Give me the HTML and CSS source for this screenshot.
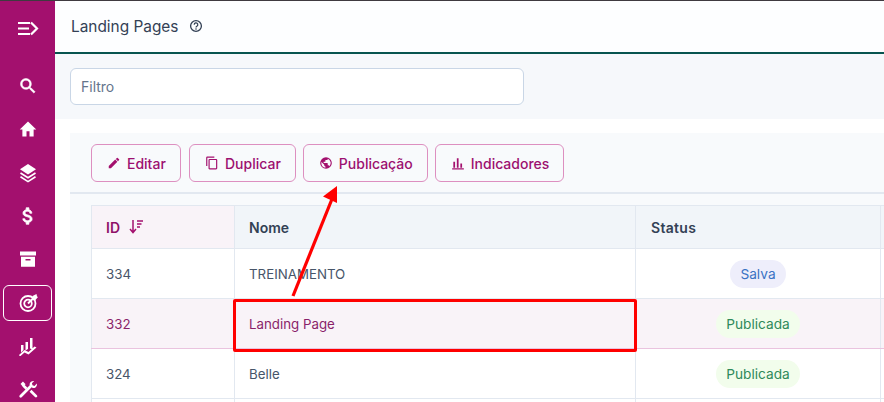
FILE: index.html
```html
<!DOCTYPE html>
<html lang="pt">
<head>
<meta charset="utf-8">
<title>Landing Pages</title>
<link rel="stylesheet" href="styles.css">
</head>
<body>
<div class="app">
  <nav class="sidebar">
    <div class="nav-item nav-toggle"><svg width="22" height="16" viewBox="0 0 22 16"><path d="M1 2h12M1 7.500h11M1 13h12" stroke="#fff" stroke-width="2.200" fill="none"/><path d="M14 1.500L20 7.500 14 13.500" stroke="#fff" stroke-width="2.200" fill="none"/></svg></div>
    <div class="nav-item nav-search"><svg width="20" height="20" viewBox="0 0 24 24"><path fill="#fff" stroke="#fff" stroke-width=".7" d="M15.500 14h-.79l-.28-.27A6.470 6.470 0 0 0 16 9.500 6.500 6.500 0 1 0 9.500 16c1.610 0 3.090-.59 4.230-1.570l.27.28v.79l5 4.990L20.490 19l-4.990-5zm-6 0C7.010 14 5 11.990 5 9.500S7.010 5 9.500 5 14 7.010 14 9.500 11.990 14 9.500 14z"/></svg></div>
    <div class="nav-item"><svg width="18" height="18" viewBox="0 0 24 24"><path fill="#fff" d="M10 22v-7h4v7h5.500v-9.500H23L12 2 1 12.500h3.500V22z"/></svg></div>
    <div class="nav-item"><svg width="20" height="20" viewBox="0 0 20 20"><path fill="#fff" d="M10 1l8 5.200-8 5.200-8-5.200z"/><path d="M2.500 10l7.500 4.800 7.500-4.800M2.500 13.800l7.500 4.800 7.500-4.800" stroke="#fff" stroke-width="1.700" fill="none"/></svg></div>
    <div class="nav-item"><svg width="22" height="22" viewBox="0 0 24 24"><path fill="#fff" stroke="#fff" stroke-width=".8" d="M11.800 10.900c-2.270-.59-3-1.200-3-2.150 0-1.090 1.010-1.850 2.700-1.850 1.780 0 2.440.85 2.500 2.100h2.210c-.07-1.720-1.120-3.300-3.210-3.810V3h-3v2.160c-1.940.42-3.500 1.680-3.500 3.610 0 2.310 1.910 3.460 4.700 4.130 2.500.6 3 1.480 3 2.410 0 .69-.49 1.790-2.700 1.790-2.060 0-2.870-.92-2.980-2.100h-2.200c.12 2.190 1.760 3.420 3.680 3.830V21h3v-2.150c1.950-.37 3.500-1.500 3.500-3.550 0-2.840-2.430-3.810-4.700-4.400z"/></svg></div>
    <div class="nav-item"><svg width="18" height="18" viewBox="0 0 18 18"><path fill="#fff" fill-rule="evenodd" d="M1 .5h16v4H1zM2 5.800h14v10H2zM6.500 8v1.400h5V8z"/></svg></div>
    <div class="nav-item nav-active"><svg width="20" height="20" viewBox="0 0 20 20"><circle cx="10" cy="10.500" r="7.500" stroke="#fff" stroke-width="1.800" fill="none"/><circle cx="10" cy="10.500" r="3.800" stroke="#fff" stroke-width="1.800" fill="none"/><path d="M10 10.500L16.500 4" stroke="#fff" stroke-width="2"/><path fill="#fff" d="M14.500 3l4-2 .5 2.500 1 .5-3 3.500-3-.5z"/></svg></div>
    <div class="nav-item"><svg width="20" height="20" viewBox="0 0 20 20"><path fill="#fff" d="M3 9h2.500v5L3 16.500zM7.500 6H10v7l-2.500 1.500zM12 2h2.500v11.500L12 12.500zM1 19l5.500-5 4 2 6-5.500 2 1-8 7-4-2-4.500 4z"/></svg></div>
    <div class="nav-item"><svg width="22" height="22" viewBox="0 0 24 24"><path fill="#fff" d="M21.700 17.600l-5.900-5.900-2.100 2.100 5.900 5.900c.6.600 1.500.6 2.100 0s.6-1.500 0-2.100zM17.300 9.900c1.900.3 3.800-1 4.300-2.900.2-.7.200-1.300 0-2l-2.500 2.500-2.200-.6-.6-2.200L18.800 2.200c-2.100-.6-4.300.6-4.900 2.700-.2.700-.2 1.400 0 2L3 17.800c-.6.600-.6 1.500 0 2.100s1.500.6 2.100 0L16 9.100zM6.400 8.600l2.800 2.800 2-2-2.800-2.800 1-1L6.500 2.700 3.800 5.400l.9.900z"/></svg></div>
  </nav>
  <main class="main">
    <header class="topbar">
      <h1 class="page-title">Landing Pages</h1>
      <svg class="help" width="14" height="14" viewBox="0 0 14 14"><circle cx="7" cy="7" r="5.400" stroke="#334155" stroke-width="1.300" fill="none"/><path d="M5.200 5.700a1.800 1.800 0 1 1 2.700 1.500c-.6.400-.9.600-.9 1.200" stroke="#334155" stroke-width="1.200" fill="none"/><circle cx="7" cy="10" r=".8" fill="#334155"/></svg>
    </header>
    <section class="filter-band">
      <div class="filter-input">Filtro</div>
    </section>
    <section class="content">
      <div class="card">
        <div class="toolbar">
          <button class="btn btn-first"><svg width="14" height="14" viewBox="0 0 24 24"><path fill="#a3106e" d="M3 17.250V21h3.750L17.810 9.940l-3.750-3.750L3 17.250zM20.710 7.040a1 1 0 0 0 0-1.410l-2.340-2.340a1 1 0 0 0-1.410 0l-1.830 1.830 3.750 3.750 1.830-1.830z"/></svg>Editar</button>
          <button class="btn"><svg width="14" height="14" viewBox="0 0 24 24"><path fill="#a3106e" d="M16 1H4a2 2 0 0 0-2 2v14h2V3h12V1zm3 4H8a2 2 0 0 0-2 2v14c0 1.100.9 2 2 2h11a2 2 0 0 0 2-2V7a2 2 0 0 0-2-2zm0 16H8V7h11v14z"/></svg>Duplicar</button>
          <button class="btn"><svg width="14" height="14" viewBox="0 0 24 24"><path fill="#a3106e" d="M12 2a10 10 0 1 0 0 20 10 10 0 0 0 0-20zm-1 17.930A8 8 0 0 1 4 12c0-.62.080-1.210.21-1.790L9 15v1c0 1.100.9 2 2 2v1.930zm6.900-2.540A2 2 0 0 0 16 16h-1v-3a1 1 0 0 0-1-1H8v-2h2a1 1 0 0 0 1-1V7h2a2 2 0 0 0 2-2v-.41a8 8 0 0 1 2.900 12.800z"/></svg>Publicação</button>
          <button class="btn"><svg width="14" height="14" viewBox="0 0 24 24"><path fill="#a3106e" d="M2 21h20v2H2zM4 10h3v10H4zM10 4h3v16h-3zM16 13h3v7h-3z"/></svg>Indicadores</button>
        </div>
        <div class="table-wrap">
          <table class="grid">
            <thead>
              <tr>
                <th class="col-id sorted">ID <svg class="sort" width="16" height="16" viewBox="0 0 16 16"><path d="M5 1v12M2 10l3 3.500 3-3.500" stroke="#a3106e" stroke-width="1.500" fill="none"/><path d="M9 2h6M9 5h4.500M9 8h3" stroke="#a3106e" stroke-width="1.400"/></svg></th>
                <th class="col-name">Nome</th>
                <th class="col-status">Status</th>
                <th></th>
              </tr>
            </thead>
            <tbody>
              <tr>
                <td>334</td><td>TREINAMENTO</td>
                <td class="cell-status"><span class="pill pill-saved">Salva</span></td><td></td>
              </tr>
              <tr class="selected">
                <td>332</td><td>Landing Page</td>
                <td class="cell-status"><span class="pill pill-live">Publicada</span></td><td></td>
              </tr>
              <tr>
                <td>324</td><td>Belle</td>
                <td class="cell-status"><span class="pill pill-live">Publicada</span></td><td></td>
              </tr>
              <tr><td>&nbsp;</td><td></td><td></td><td></td></tr>
            </tbody>
          </table>
        </div>
      </div>
    </section>
  </main>
</div>
<div class="highlight"></div>
<svg class="arrow" width="60" height="120" viewBox="0 0 60 120"><path d="M8 115L47 18" stroke="#f00" stroke-width="3.200" fill="none"/><path fill="#f00" d="M52 5L52 22 38 15.500z"/></svg>
</body>
</html>
```
FILE: styles.css
```css
* { box-sizing: border-box; }
html, body { margin: 0; height: 100%; overflow: hidden; }
body { font-family: Inter, "Liberation Sans", sans-serif; color: #334155; background: #fff; border-top: 1px solid #3f3a40; position: relative; }
.app { display: flex; height: 401px; }
.sidebar { width: 55px; flex: none; background: #a3106e; display: flex; flex-direction: column; align-items: stretch; padding: 6px 0 0 3px; overflow: hidden; }
.nav-item { width: 49px; height: 36px; margin-bottom: 7.400px; display: flex; align-items: center; justify-content: center; flex: none; }
.nav-toggle { height: 44px; margin-bottom: 0; }
.nav-search { margin-top: 17px; }
.nav-active { border: 1px solid #fff; border-radius: 6px; }
.main { flex: 1; min-width: 0; display: flex; flex-direction: column; }
.topbar { height: 53px; flex: none; background: #fdfeff; border-bottom: 2px solid #07544f; display: flex; align-items: center; padding: 0 0 1px 16px; gap: 11px; }
.page-title { margin: 0; font-size: 15.400px; font-weight: 400; color: #334155; }
.filter-band { height: 65px; flex: none; background: #f6f8fb; padding: 14px 15px 0; }
.filter-input { width: 454px; height: 37px; background: #fff; border: 1px solid #c9d6e6; border-radius: 6px; font-size: 14px; color: #64748b; display: flex; align-items: center; padding-left: 10px; }
.content { flex: 1; background: #fff; padding: 14px 0 0 15px; min-height: 0; overflow: hidden; }
.card { background: #f8fafc; height: 100%; }
.toolbar { height: 61px; border-bottom: 2px solid #e2e8f0; padding: 11px 0 0 21px; display: flex; gap: 7px; align-items: flex-start; }
.btn { height: 38px; background: transparent; border: 1px solid #dd8fc0; border-radius: 6px; color: #9c1070; font: 500 14px Inter, "Liberation Sans", sans-serif; padding: 0 14px 0 15px; display: flex; align-items: center; gap: 6px; }
.btn-first { width: 90px; margin-right: 1px; }
.table-wrap { padding: 11px 0 0 21px; }
.grid { border-collapse: collapse; table-layout: fixed; width: 850px; font-size: 13.300px; }
.grid th, .grid td { border: 1px solid #e2e8f0; padding: 0 14px; text-align: left; }
.grid th { height: 43px; background: #f1f5f9; font-weight: 600; font-size: 14px; color: #334155; }
.grid td { height: 50px; background: #fff; color: #475569; }
.col-id { width: 143px; }
.col-name { width: 401px; }
.grid th.col-status { width: 245px; padding-left: 15px; letter-spacing: .3px; }
.grid th.sorted { background: #f9f3f8; color: #8f1068; }
.sort { vertical-align: -2px; margin-left: 4px; }
.grid .selected td { background: #f9f3f8; color: #8a1f6a; border-top-color: #eac3df; border-bottom-color: #eac3df; }
.cell-status { text-align: center !important; }
.pill { display: inline-block; height: 28px; line-height: 28px; padding: 0 10px; border-radius: 14px; font-size: 13.700px; }
.pill-saved { background: #eeeefb; color: #3b73c4; }
.pill-live { background: #f2fdec; color: #2f8a5b; }
.highlight { position: absolute; left: 233px; top: 298px; width: 404px; height: 53px; border: 3px solid #f00; border-radius: 2px; }
.arrow { position: absolute; left: 285px; top: 180px; }
```
